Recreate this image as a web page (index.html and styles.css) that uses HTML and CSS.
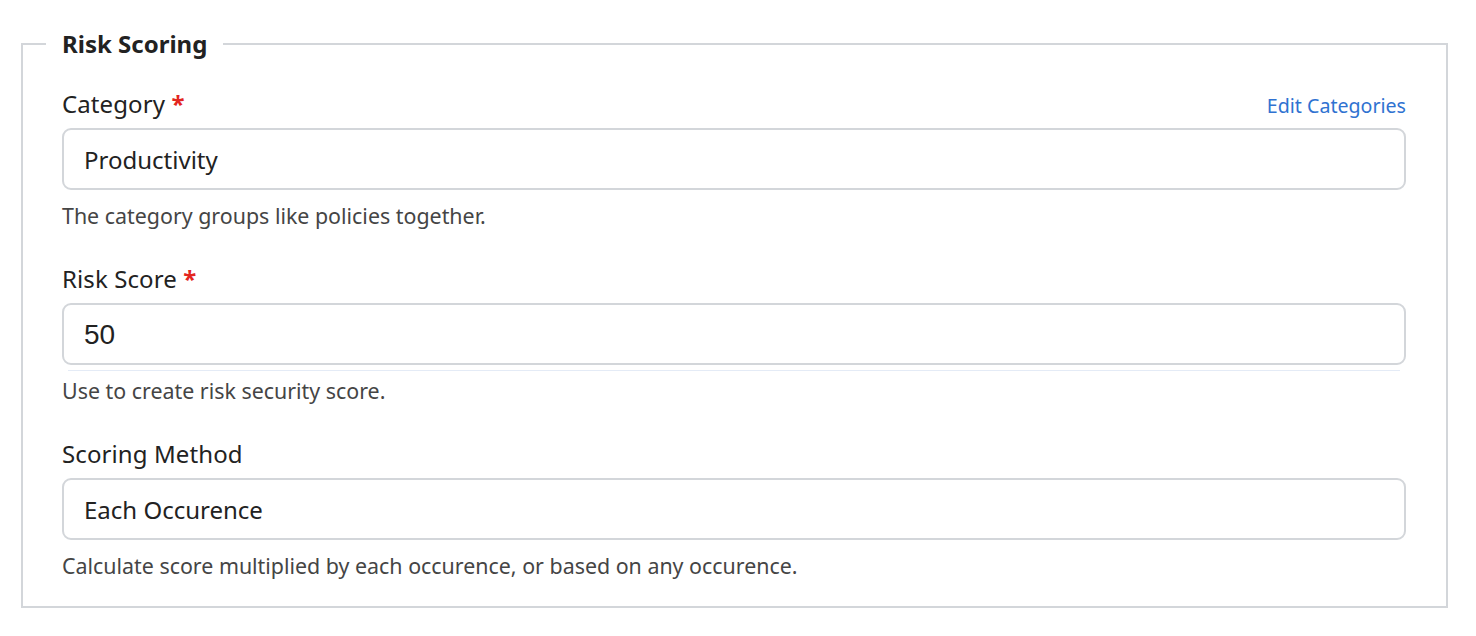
FILE: index.html
```html
<!DOCTYPE html>
<html lang="en">
<head>
<meta charset="utf-8">
<title>Risk Scoring</title>
<link rel="stylesheet" href="styles.css">
</head>
<body>
<fieldset class="panel">
  <legend class="panel-title">Risk Scoring</legend>
  <div class="fields">
    <div class="field">
      <div class="field-head">
        <label class="field-label">Category <span class="req">*</span></label>
        <a class="field-link" href="#">Edit Categories</a>
      </div>
      <div class="input">Productivity</div>
      <p class="help">The category groups like policies together.</p>
    </div>
    <div class="field">
      <div class="field-head">
        <label class="field-label">Risk Score <span class="req">*</span></label>
      </div>
      <div class="input input--number input--underline">50</div>
      <p class="help">Use to create risk security score.</p>
    </div>
    <div class="field">
      <div class="field-head">
        <label class="field-label">Scoring Method</label>
      </div>
      <div class="input">Each Occurence</div>
      <p class="help">Calculate score multiplied by each occurence, or based on any occurence.</p>
    </div>
  </div>
</fieldset>
</body>
</html>
```
FILE: styles.css
```css
* { box-sizing: border-box; }
html, body { background: #ffffff; }
body {
  margin: 0;
  padding: 28px 28px 0 21px;
  font-family: "Noto Sans", "Open Sans", sans-serif;
  color: #212529;
}
.panel {
  margin: 0;
  border: 2px solid #d3d6da;
  padding: 28px 40px 27px 39px;
  min-width: 0;
}
.panel-title {
  margin-left: -16px;
  padding: 0 16px;
  font-size: 24px;
  line-height: 32px;
  font-weight: 700;
  color: #222;
}
.fields {
  display: flex;
  flex-direction: column;
  gap: 34px;
}
.field {
  display: flex;
  flex-direction: column;
}
.field-head {
  display: flex;
  justify-content: space-between;
  align-items: center;
  height: 32px;
  margin-bottom: 8px;
}
.field-label {
  font-size: 24px;
  line-height: 32px;
  color: #222;
  letter-spacing: 0.1px;
}
.req { color: #e3261f; font-weight: 700; }
.field-link {
  font-size: 19.6px;
  line-height: 28px;
  color: #2f72d1;
  text-decoration: none;
  margin-top: 4px;
}
.input {
  position: relative;
  height: 62px;
  border: 2px solid #d3d6da;
  border-radius: 9px;
  padding: 0 20px;
  display: flex;
  align-items: center;
  font-size: 24px;
  color: #222;
}
.input--number {
  font-family: "Liberation Sans", Arial, sans-serif;
  font-size: 28px;
  padding-top: 2px;
}
.input--underline::after {
  content: "";
  position: absolute;
  left: 4px;
  right: 4px;
  bottom: -8px;
  height: 1px;
  background: #e4ebf6;
}
.help {
  margin: 11px 0 0;
  padding-top: 1px;
  font-size: 21.4px;
  line-height: 27px;
  color: #454545;
}
```
